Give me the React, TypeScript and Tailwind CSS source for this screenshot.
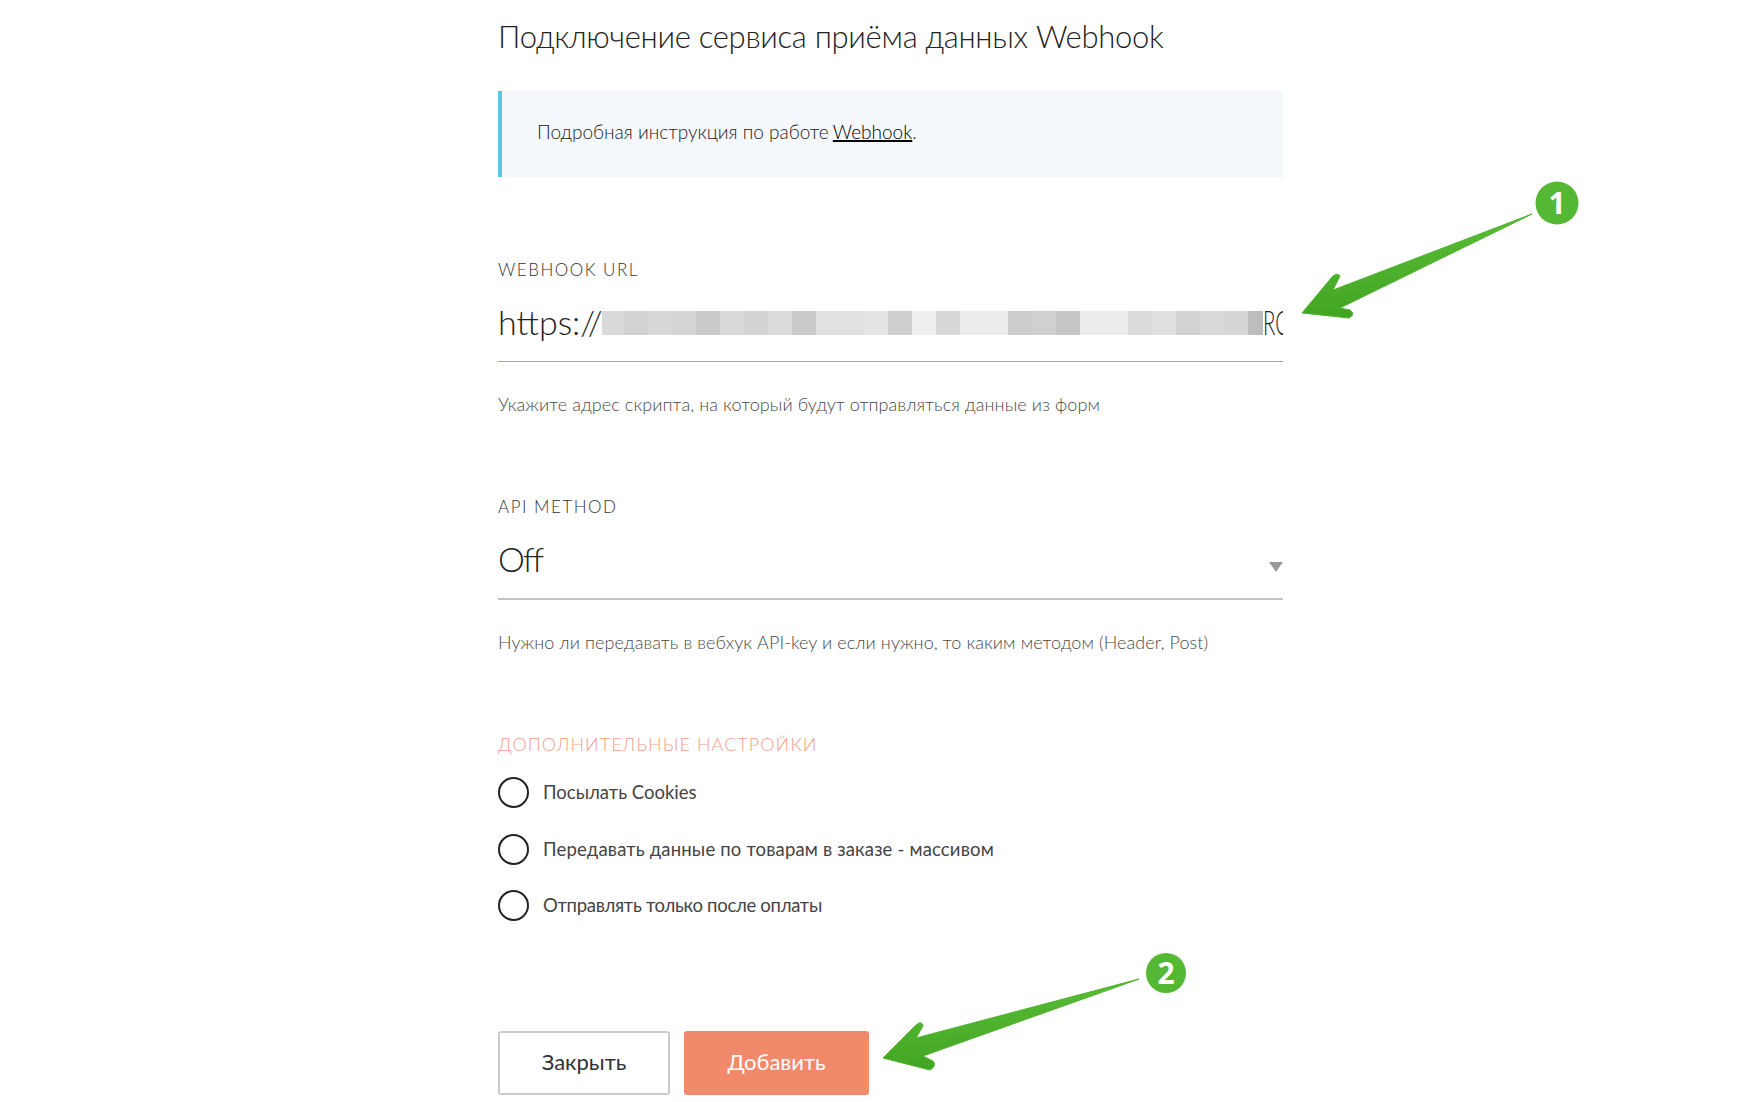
const tiles = [
  'w-[22px] bg-[#dadada]', 'w-[24px] bg-[#d2d2d2]', 'w-[24px] bg-[#d8d8d8]', 'w-[24px] bg-[#d4d4d4]',
  'w-[24px] bg-[#cacaca]', 'w-[24px] bg-[#d9d9d9]', 'w-[24px] bg-[#d3d3d3]', 'w-[24px] bg-[#dcdcdc]',
  'w-[24px] bg-[#cbcbcb]', 'w-[24px] bg-[#e1e1e1]', 'w-[24px] bg-[#e1e1e1]', 'w-[24px] bg-[#e4e4e4]',
  'w-[24px] bg-[#cfcfcf]', 'w-[24px] bg-[#efefef]', 'w-[24px] bg-[#d8d8d8]', 'w-[24px] bg-[#ececec]',
  'w-[24px] bg-[#ececec]', 'w-[24px] bg-[#cdcdcd]', 'w-[24px] bg-[#d0d0d0]', 'w-[24px] bg-[#c6c6c6]',
  'w-[24px] bg-[#ededed]', 'w-[24px] bg-[#ededed]', 'w-[24px] bg-[#dcdcdc]', 'w-[24px] bg-[#e0e0e0]',
  'w-[24px] bg-[#d2d2d2]', 'w-[24px] bg-[#dadada]', 'w-[24px] bg-[#d6d6d6]', 'w-[15px] bg-[#bdbdbd]',
];

const options = [
  { label: 'Посылать Cookies', rowClass: 'h-[30px]', textClass: 'tracking-[0px]' },
  { label: 'Передавать данные по товарам в заказе - массивом', rowClass: 'h-[30px] mt-[27px]', textClass: 'tracking-[0.17px]' },
  { label: 'Отправлять только после оплаты', rowClass: 'h-[30px] mt-[26px]', textClass: 'tracking-[-0.3px]' },
];

function Arrows() {
  return (
    <svg className="absolute inset-0 pointer-events-none" width="1764" height="1102" viewBox="0 0 1764 1102" fill="none">
      <defs>
        <linearGradient id="arrowFill" x1="0" y1="0" x2="0.15" y2="1">
          <stop offset="0" stopColor="#5cc03a" />
          <stop offset="1" stopColor="#42a522" />
        </linearGradient>
      </defs>
      <circle cx="1557" cy="203" r="21.5" fill="#55b835" />
      <path d="M1532 214 L1333 290 L1340 276 Q1337 272 1332 277 L1302 313 L1349 318 Q1356 314 1350 310 L1340 308 Z" fill="url(#arrowFill)" stroke="#4fb32e" strokeWidth="1" strokeLinejoin="round" />
      <circle cx="1166" cy="973" r="20" fill="#55b835" />
      <path d="M1139 979 L916 1038 L923 1026 Q922 1020 916 1025 L883 1058 L930 1070 Q937 1066 933 1061 L923 1056 Z" fill="url(#arrowFill)" stroke="#4fb32e" strokeWidth="1" strokeLinejoin="round" />
      <text x="1557" y="214" textAnchor="middle" fontSize="30" fontWeight="700" fill="#fff" fontFamily="'Open Sans', sans-serif">1</text>
      <text x="1166" y="984" textAnchor="middle" fontSize="30" fontWeight="700" fill="#fff" fontFamily="'Open Sans', sans-serif">2</text>
    </svg>
  );
}

export default function App() {
  return (
    <div className="relative w-[1764px] h-[1102px] overflow-hidden bg-white font-['Lato','Noto_Sans',sans-serif] text-[#333]">
      <div className="ml-[498px] w-[785px] pt-[14px]">
        <h1 className="text-[31px] leading-[44px] font-light tracking-[-0.3px] text-[#222]">Подключение сервиса приёма данных Webhook</h1>

        <div className="mt-[33px] h-[86px] flex items-center pl-[35px] pb-[4px] border-l-4 border-[#5ac8e0] bg-[#f5f9fe] text-[19px] font-light text-[#222]">
          <span>
            Подробная инструкция по работе <a className="-ml-[1px] underline decoration-[1.5px] text-black">Webhook</a>.
          </span>
        </div>

        <label className="block mt-[81px] text-[17px] leading-[24px] font-light tracking-[1.5px] text-[#333]">WEBHOOK URL</label>
        <div className="mt-[14px] h-[66px] flex items-center pb-[12px] border-b border-[#ee8a6c] overflow-hidden whitespace-nowrap text-[34px] font-light text-[#222]">
          <span className="w-[104px] shrink-0 -mt-[2px]">https://</span>
          <div className="flex shrink-0 h-[24px]">
            {tiles.map((cls, i) => (
              <div key={i} className={cls} />
            ))}
          </div>
          <span className="shrink-0 -mt-[2px] origin-left scale-x-[0.6]">RC</span>
        </div>
        <p className="mt-[30px] text-[18px] leading-[24px] font-light tracking-[0.08px] text-[#4a4a4a]">Укажите адрес скрипта, на который будут отправляться данные из форм</p>

        <label className="block mt-[79px] text-[17px] leading-[24px] font-light tracking-[1.5px] text-[#333]">API METHOD</label>
        <div className="mt-[14px] h-[67px] flex items-center justify-between pb-[11px] border-b-2 border-[#c4c4c4] text-[34px] font-light tracking-[-1.9px] text-[#222]">
          <span className="-mt-[4px]">Off</span>
          <span className="mt-[14px] w-0 h-0 border-x-[7px] border-x-transparent border-t-[10px] border-t-[#999]" />
        </div>
        <p className="mt-[30px] text-[18px] leading-[24px] font-light tracking-[0.08px] text-[#4a4a4a]">Нужно ли передавать в вебхук API-key и если нужно, то каким методом (Header, Post)</p>

        <h2 className="mt-[78px] text-[18px] leading-[24px] font-light tracking-[1.05px] text-[#f2a08a]">ДОПОЛНИТЕЛЬНЫЕ НАСТРОЙКИ</h2>

        <div className="mt-[21px]">
          {options.map((o) => (
            <div key={o.label} className={`flex items-center gap-[14px] ${o.rowClass}`}>
              <span className="w-[31px] h-[31px] shrink-0 rounded-full border-2 border-[#222]" />
              <span className={`pt-[2px] text-[18.5px] text-[#444] ${o.textClass}`}>{o.label}</span>
            </div>
          ))}
        </div>

        <div className="mt-[111px] flex gap-[14px]">
          <button className="w-[172px] h-[64px] pb-[4px] rounded-[3px] border-2 border-[#ccc] bg-white text-[22px] text-[#333]">Закрыть</button>
          <button className="w-[185px] h-[64px] pb-[4px] rounded-[3px] bg-[#f08a6b] text-[22px] text-white">Добавить</button>
        </div>
      </div>
      <Arrows />
    </div>
  );
}
